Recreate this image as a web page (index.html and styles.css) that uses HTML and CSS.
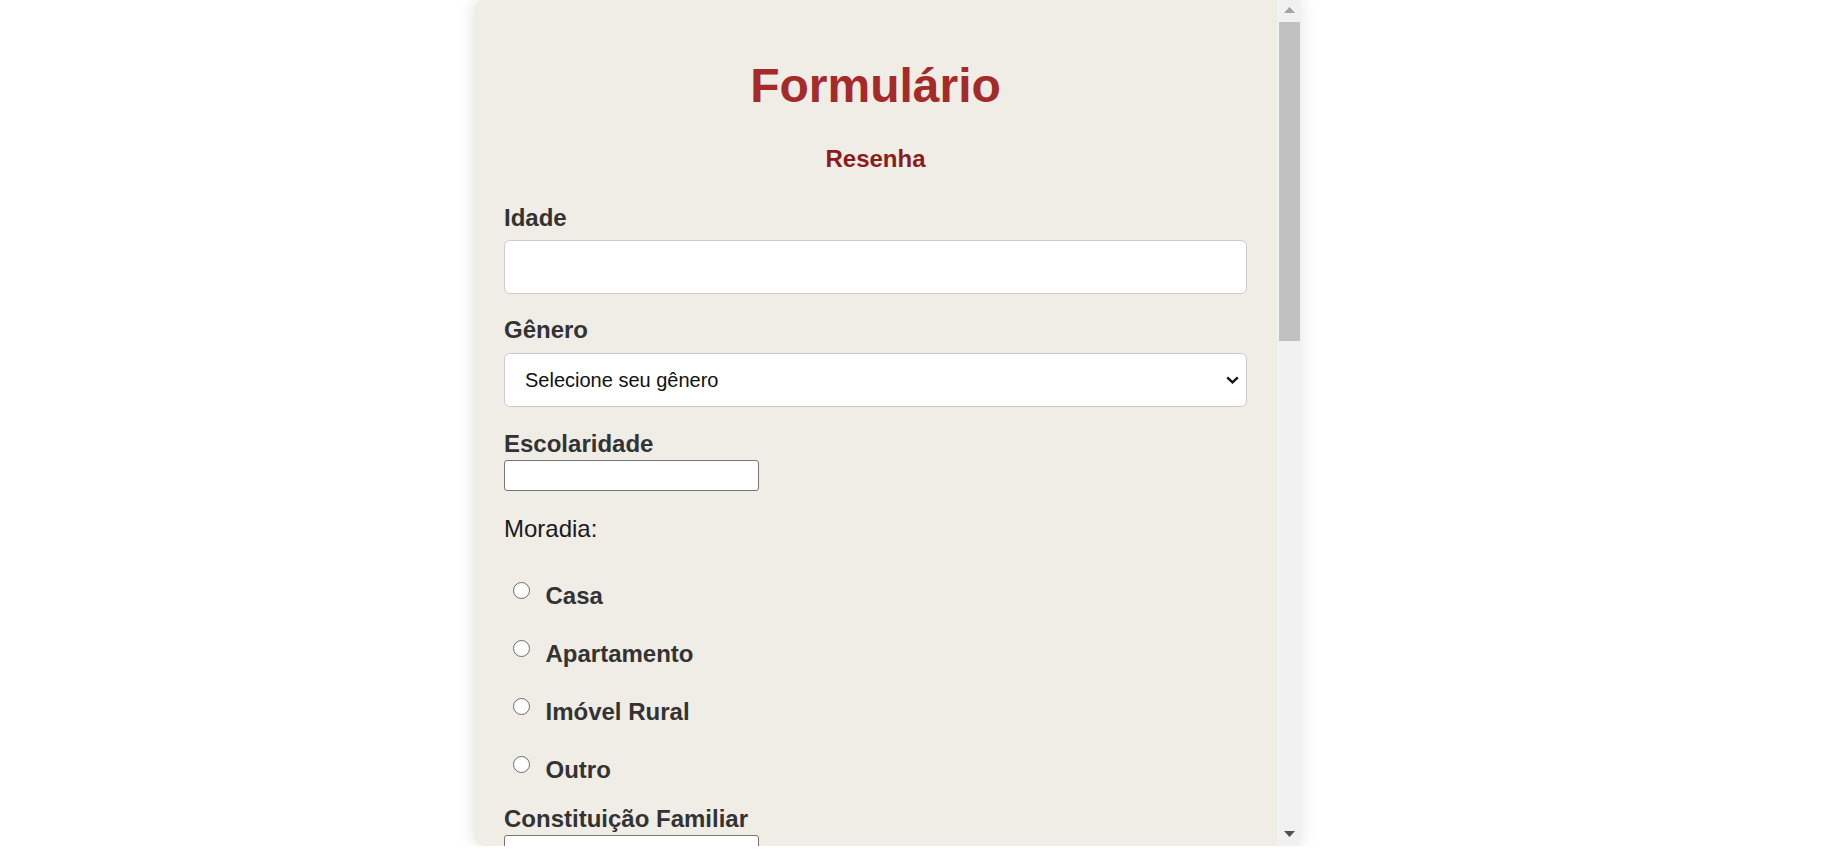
FILE: index.html
```html
<!DOCTYPE html>
<html lang="pt-BR">
<head>
<meta charset="utf-8">
<title>Formulário</title>
<link rel="stylesheet" href="styles.css">
</head>
<body>
<div class="card">
  <div class="viewport">
    <form class="form">
      <h1 class="title">Formulário</h1>
      <h2 class="subtitle">Resenha</h2>

      <div class="field field-idade">
        <label class="label" for="idade">Idade</label>
        <input class="text-input" id="idade" type="text">
      </div>

      <div class="field field-genero">
        <label class="label" for="genero">Gênero</label>
        <div class="select-wrap">
          <select class="select" id="genero">
            <option>Selecione seu gênero</option>
            <option>Feminino</option>
            <option>Masculino</option>
            <option>Outro</option>
          </select>
          <svg class="chevron" width="13" height="8" viewBox="0 0 13 8"><path d="M1.2 1.3 L6.5 6.4 L11.8 1.3" fill="none" stroke="#111" stroke-width="2.3"/></svg>
        </div>
      </div>

      <div class="field field-compact field-escolaridade">
        <label class="label" for="escolaridade">Escolaridade</label>
        <input class="plain-input" id="escolaridade" type="text">
      </div>

      <p class="group-title">Moradia:</p>
      <div class="radio-list">
        <label class="radio-row"><input class="radio" type="radio" name="moradia"><span>Casa</span></label>
        <label class="radio-row"><input class="radio" type="radio" name="moradia"><span>Apartamento</span></label>
        <label class="radio-row"><input class="radio" type="radio" name="moradia"><span>Imóvel Rural</span></label>
        <label class="radio-row"><input class="radio" type="radio" name="moradia"><span>Outro</span></label>
      </div>

      <div class="field field-compact field-familia">
        <label class="label" for="familia">Constituição Familiar</label>
        <input class="plain-input" id="familia" type="text">
      </div>
    </form>
  </div>
  <div class="scrollbar" aria-hidden="true">
    <div class="sb-btn">
      <svg class="sb-arrow" width="11" height="6" viewBox="0 0 11 6"><polygon points="0,6 5.5,0 11,6" fill="#a3a3a3"/></svg>
    </div>
    <div class="sb-track"><div class="sb-thumb"></div></div>
    <div class="sb-btn">
      <svg class="sb-arrow" width="11" height="6" viewBox="0 0 11 6"><polygon points="0,0 11,0 5.5,6" fill="#505050"/></svg>
    </div>
  </div>
</div>
</body>
</html>
```

FILE: styles.css
```css
html, body {
  margin: 0;
  padding: 0;
  background: #ffffff;
}

body {
  font-family: "Liberation Sans", Arial, sans-serif;
}

.card {
  margin-left: 474px;
  width: 826px;
  height: 846px;
  display: flex;
  overflow: hidden;
  background: #efede6;
  border-radius: 10px 0 0 10px;
  box-shadow: 0 0 18px rgba(0, 0, 0, 0.12);
}

.viewport {
  flex: 1;
  min-width: 0;
  overflow: hidden;
}

.scrollbar {
  flex: none;
  width: 23px;
  display: flex;
  flex-direction: column;
  background: #f1f1f1;
}

.sb-btn {
  flex: none;
  height: 22px;
  box-sizing: border-box;
  padding: 7px 0 0 7px;
}

.sb-arrow {
  display: block;
}

.sb-track {
  flex: 1;
  padding-left: 2px;
}

.sb-thumb {
  height: 319px;
  background: #c1c1c1;
}

.form {
  box-sizing: border-box;
  padding: 30px;
  display: flex;
  flex-direction: column;
}

.title {
  margin: 28px 0 0;
  font-size: 48px;
  line-height: 56px;
  font-weight: bold;
  text-align: center;
  color: #a52a2a;
}

.subtitle {
  margin: 31px 0 0;
  font-size: 24px;
  line-height: 28px;
  font-weight: bold;
  text-align: center;
  color: #8b1c1c;
}

.field {
  display: flex;
  flex-direction: column;
}

.field-idade {
  margin-top: 30.5px;
}

.field-genero {
  margin-top: 22.5px;
}

.field-escolaridade {
  margin-top: 23px;
}

.field-familia {
  margin-top: 21.5px;
}

.label {
  display: block;
  font-size: 24px;
  line-height: 28px;
  font-weight: bold;
  color: #333333;
}

.text-input {
  display: block;
  margin-top: 8px;
  height: 54px;
  width: 100%;
  box-sizing: border-box;
  border: 1px solid #cccccc;
  border-radius: 6px;
  background: #ffffff;
  font-family: "Liberation Sans", Arial, sans-serif;
  font-size: 20px;
  padding: 0 20px;
}

.select-wrap {
  position: relative;
  margin-top: 8.5px;
}

.select {
  display: block;
  width: 100%;
  height: 54px;
  box-sizing: border-box;
  -webkit-appearance: none;
  appearance: none;
  background: #ffffff;
  border: 1px solid #cccccc;
  border-radius: 6px;
  padding: 0 40px 0 20px;
  font-family: "Liberation Sans", Arial, sans-serif;
  font-size: 20px;
  color: #111111;
}

.chevron {
  position: absolute;
  right: 8px;
  top: 50%;
  transform: translateY(-50%);
  pointer-events: none;
}

.plain-input {
  display: block;
  margin-top: 2px;
  width: 255px;
  height: 31px;
  box-sizing: border-box;
  border: 1px solid #767676;
  border-radius: 3px;
  background: #ffffff;
  font-family: "Liberation Sans", Arial, sans-serif;
  font-size: 16px;
}

.group-title {
  margin: 24px 0 0;
  font-size: 24px;
  line-height: 28px;
  font-weight: normal;
  color: #1a1a1a;
}

.radio-list {
  margin-top: 39.2px;
  display: flex;
  flex-direction: column;
  gap: 30px;
}

.radio-row {
  display: flex;
  align-items: flex-start;
  font-size: 24px;
  line-height: 28px;
  font-weight: bold;
  color: #333333;
}

.radio {
  -webkit-appearance: none;
  appearance: none;
  box-sizing: border-box;
  width: 17px;
  height: 17px;
  margin: 0 16px 0 8.5px;
  border: 1.3px solid #6a6a6a;
  border-radius: 50%;
  background: #ffffff;
  flex: none;
}
```
